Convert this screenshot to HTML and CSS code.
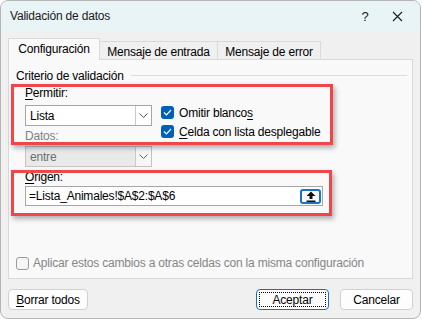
FILE: index.html
```html
<html lang="es">

<head>
    <meta charset="UTF-8">
    <meta name="viewport" content="width=device-width, initial-scale=1.0">
    <title>Validación de datos</title>

    <link rel="stylesheet" href="styles.css">
</head>

<body>

    <div class="window">

        <header class="titlebar">
            <div class="title">Validación de datos</div>
            <div class="title-buttons">
                <span class="help">?</span>
                <svg class="close" width="11" height="11" viewBox="0 0 11 11">
                    <path d="M1 1 L10 10 M10 1 L1 10" stroke="#1a1a1a" stroke-width="1.1" fill="none" />
                </svg>
            </div>
        </header>

        <main class="content">

            <nav class="tabs">
                <div class="tab tab-config active">Configuración</div>
                <div class="tab tab-input">Mensaje de entrada</div>
                <div class="tab tab-error">Mensaje de error</div>
            </nav>

            <section class="panel">

                <div class="legend">
                    <span>Criterio de validación</span>
                    <div class="legend-line"></div>
                </div>

                <div class="criteria">
                    <label class="lbl lbl-permit"><u>P</u>ermitir:</label>
                    <div class="combo combo-permit">
                        <span class="combo-value">Lista</span>
                        <span class="combo-arrow">
                            <svg width="9" height="5" viewBox="0 0 9 5">
                                <path d="M0.5 0.5 L4.5 4.5 L8.5 0.5" stroke="#555" fill="none" />
                            </svg>
                        </span>
                    </div>

                    <div class="checks">
                        <div class="check-row">
                            <span class="box on">
                                <svg width="9" height="7" viewBox="0 0 9 7">
                                    <path d="M1 3.5 L3.5 6 L8 1" stroke="#fff" stroke-width="1.2" fill="none" />
                                </svg>
                            </span>
                            <span>Omitir blanco<u>s</u></span>
                        </div>
                        <div class="check-row">
                            <span class="box on">
                                <svg width="9" height="7" viewBox="0 0 9 7">
                                    <path d="M1 3.5 L3.5 6 L8 1" stroke="#fff" stroke-width="1.2" fill="none" />
                                </svg>
                            </span>
                            <span><u>C</u>elda con lista desplegable</span>
                        </div>
                    </div>

                    <label class="lbl lbl-data disabled">Datos:</label>
                    <div class="combo combo-data disabled">
                        <span class="combo-value">entre</span>
                        <span class="combo-arrow">
                            <svg width="9" height="5" viewBox="0 0 9 5">
                                <path d="M0.5 0.5 L4.5 4.5 L8.5 0.5" stroke="#666" fill="none" />
                            </svg>
                        </span>
                    </div>
                </div>

                <label class="lbl lbl-origin"><u>O</u>rigen:</label>
                <div class="source">
                    <span class="source-value">=Lista_Animales!$A$2:$A$6</span>
                    <span class="pick">
                        <svg width="10" height="11" viewBox="0 0 10 11">
                            <path d="M5 0.5 L9.5 5 L6.5 5 L6.5 8 L3.5 8 L3.5 5 L0.5 5 Z" fill="#111" />
                            <rect x="0.5" y="9.5" width="9" height="1.5" fill="#111" />
                        </svg>
                    </span>
                </div>

                <div class="apply">
                    <span class="box off"></span>
                    <span>Aplicar estos cambios a otras celdas con la misma configuración</span>
                </div>

                <!-- annotation boxes drawn over the dialog -->
                <div class="mark mark-permit"></div>
                <div class="mark mark-origin"></div>

            </section>

            <footer class="buttons">
                <button class="btn btn-clear" type="button"><u>B</u>orrar todos</button>
                <div class="btn-group">
                    <button class="btn btn-ok" type="button"><span class="focus">Aceptar</span></button>
                    <button class="btn" type="button">Cancelar</button>
                </div>
            </footer>

        </main>

    </div>

</body>

</html>
```

FILE: styles.css
```css
*,
*::after {
    box-sizing: border-box;
    margin: 0;
    padding: 0;
}

html,
body {
    height: 100%;
}

body {
    background: #ffffff;
    font-family: "Liberation Sans", Arial, sans-serif;
    font-size: 12px;
    letter-spacing: -0.2px;
    color: #000;
}

u {
    text-decoration: underline;
    text-underline-offset: 2px;
}

.window {
    width: 421px;
    height: 319px;
    border: 1px solid #b4b4b4;
    border-radius: 8px;
    overflow: hidden;
    background: #f0f0f0;
    display: flex;
    flex-direction: column;
}

.titlebar {
    height: 30px;
    background: #e8f4f6;
    display: flex;
    justify-content: space-between;
    align-items: center;
    padding: 0 0 0 9px;
    font-size: 12px;
    color: #1a1a1a;
}

.title-buttons {
    display: flex;
    align-items: center;
}

.help {
    width: 46px;
    text-align: center;
    font-size: 13px;
    margin-right: 4px;
}

.close {
    margin-right: 17px;
}

.content {
    flex: 1;
    padding: 7px 7px 0 7px;
    display: flex;
    flex-direction: column;
}

.tabs {
    display: flex;
    align-items: flex-end;
    height: 22px;
}

.tab {
    height: 19px;
    border: 1px solid #d9d9d9;
    border-bottom: none;
    border-left: none;
    background: #f0f0f0;
    display: flex;
    align-items: center;
    justify-content: center;
    padding-top: 1px;
    white-space: nowrap;
}

.tab-config {
    width: 92px;
}

.tab-input {
    width: 118px;
}

.tab-error {
    width: 103px;
}

.tab.active {
    height: 22px;
    border-left: 1px solid #d9d9d9;
    background: #f9f9f9;
    padding-top: 0;
    padding-bottom: 2px;
    position: relative;
    z-index: 1;
}

.panel {
    position: relative;
    margin-top: -1px;
    height: 220px;
    background: #f9f9f9;
    border: 1px solid #d9d9d9;
    padding: 8px 5px 0 7px;
    display: flex;
    flex-direction: column;
}

.legend {
    display: flex;
    align-items: center;
    height: 15px;
}

.legend-line {
    flex: 1;
    height: 1px;
    background: #dcdcdc;
    margin-left: 7px;
}

.criteria {
    display: grid;
    grid-template-columns: 127px 1fr;
    column-gap: 9px;
    margin-left: 9px;
}

.lbl {
    display: block;
    line-height: 15px;
}

.lbl-permit {
    margin-top: 3px;
}

.combo {
    grid-column: 1;
    height: 21px;
    margin-top: 4px;
    background: #ffffff;
    border: 1px solid #a6a6a6;
    display: flex;
    align-items: stretch;
}

.combo-value {
    flex: 1;
    padding-left: 4px;
    display: flex;
    align-items: center;
}

.combo-arrow {
    width: 16px;
    border-left: 1px solid #c9c9c9;
    display: flex;
    align-items: center;
    justify-content: center;
}

.lbl-data {
    grid-column: 1;
    margin-top: 3px;
}

.combo-data {
    margin-top: 2px;
    background: #e9e9e9;
    border-color: #c4c4c4;
}

.combo-data .combo-arrow {
    background: #f6f6f6;
}

.disabled {
    color: #7f7f7f;
}

.combo.disabled .combo-value {
    color: #6e6e6e;
}

.checks {
    grid-column: 2;
    grid-row: 2 / span 3;
    margin-top: 2px;
    display: flex;
    flex-direction: column;
}

.check-row {
    height: 19px;
    display: flex;
    align-items: center;
    gap: 5px;
}

.box {
    width: 13px;
    height: 13px;
    border-radius: 3px;
    display: flex;
    align-items: center;
    justify-content: center;
}

.box.on {
    background: #005fb8;
}

.box.off {
    border: 1px solid #9a9a9a;
    background: #f6f6f6;
}

.lbl-origin {
    margin: 3px 0 0 9px;
}

.source {
    margin: 1px 0 0 9px;
    width: 298px;
    height: 20px;
    background: #ffffff;
    border: 1px solid #a6a6a6;
    display: flex;
    align-items: center;
    justify-content: space-between;
    padding: 0 1px 0 3px;
}

.pick {
    width: 21px;
    height: 15px;
    border: 2px solid #1a73c8;
    border-radius: 3px;
    background: #fdfdfd;
    display: flex;
    align-items: center;
    justify-content: center;
}

.apply {
    margin-top: auto;
    margin-bottom: 8px;
    display: flex;
    align-items: center;
    gap: 4px;
    color: #858585;
}

.mark {
    position: absolute;
    left: 2px;
    border: 3px solid #ef4649;
    box-shadow: 2px 3px 5px rgba(0, 0, 0, 0.3);
}

.mark-permit {
    top: 24px;
    width: 322px;
    height: 61px;
}

.mark-origin {
    top: 110px;
    width: 321px;
    height: 46px;
}

.buttons {
    margin-top: 10px;
    display: flex;
    justify-content: space-between;
}

.btn-group {
    display: flex;
    gap: 11px;
}

.btn {
    height: 21px;
    width: 73px;
    background: #fdfdfd;
    border: 1px solid #d0d0d0;
    border-radius: 4px;
    font-family: inherit;
    font-size: 12px;
    letter-spacing: inherit;
    color: #000;
    display: flex;
    align-items: center;
    justify-content: center;
}

.btn-clear {
    width: 80px;
}

.btn-ok {
    border: 1px solid #1a6fc4;
    padding: 2px;
}

.focus {
    width: 100%;
    height: 100%;
    border: 1px dotted #000;
    display: flex;
    align-items: center;
    justify-content: center;
}
```
